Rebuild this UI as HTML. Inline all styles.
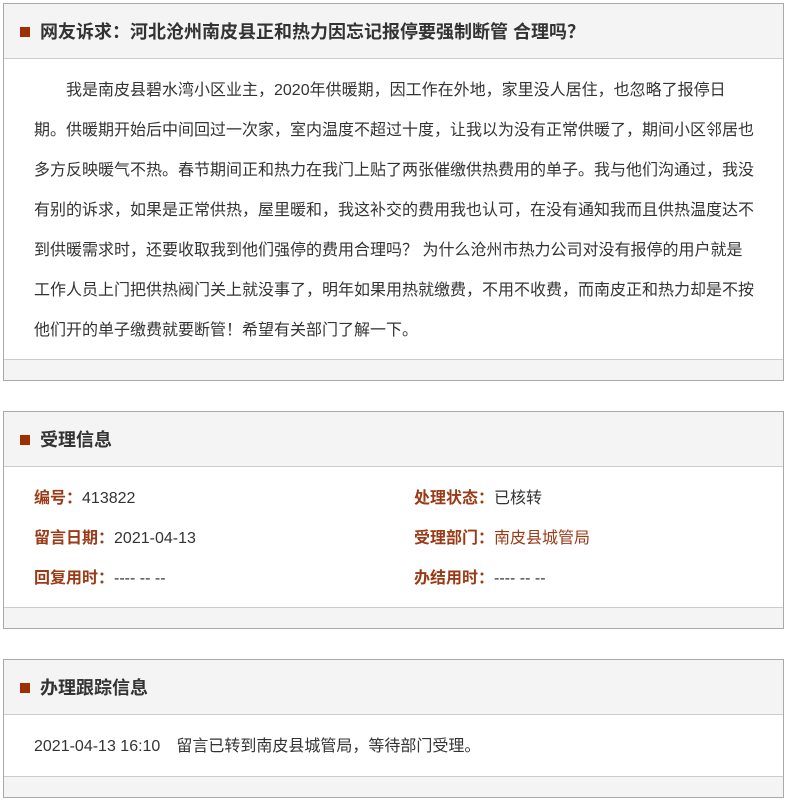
<!DOCTYPE html>
<html><head><meta charset="utf-8"><style>
body{margin:0;background:#fff;font-family:"Liberation Sans","Noto Sans CJK SC",sans-serif;color:#333;}
.box{position:absolute;left:3px;width:779px;border:1px solid #aaa;background:#fff;}
.hd{height:54px;background:#f4f4f4;border-bottom:1px solid #ccc;position:relative;}
.hd .sq{position:absolute;left:16px;top:23px;width:10px;height:10px;background:#9b3100;}
.hd .t{position:absolute;left:36px;top:1px;line-height:54px;font-size:18px;font-weight:bold;color:#333;white-space:nowrap;}
.ft{height:20px;background:#f4f4f4;border-top:1px solid #ccc;position:absolute;left:0;right:0;bottom:0;}
.body{position:relative;font-size:16px;}
.p{position:absolute;left:30px;top:12px;line-height:40px;white-space:nowrap;}
.lb{color:#9b3a17;font-weight:bold;}
.br{color:#9b3a17;}
.row{position:absolute;line-height:20px;white-space:nowrap;font-size:16px;}
</style></head><body>
<div class="box" style="top:3px;height:376px;">
<div class="hd"><div class="sq"></div><div class="t">网友诉求：河北沧州南皮县正和热力因忘记报停要强制断管 合理吗？</div></div>
<div class="body"><div class="p">&emsp;&emsp;我是南皮县碧水湾小区业主，2020年供暖期，因工作在外地，家里没人居住，也忽略了报停日<br>期。供暖期开始后中间回过一次家，室内温度不超过十度，让我以为没有正常供暖了，期间小区邻居也<br>多方反映暖气不热。春节期间正和热力在我门上贴了两张催缴供热费用的单子。我与他们沟通过，我没<br>有别的诉求，如果是正常供热，屋里暖和，我这补交的费用我也认可，在没有通知我而且供热温度达不<br>到供暖需求时，还要收取我到他们强停的费用合理吗？ 为什么沧州市热力公司对没有报停的用户就是<br>工作人员上门把供热阀门关上就没事了，明年如果用热就缴费，不用不收费，而南皮正和热力却是不按<br>他们开的单子缴费就要断管！希望有关部门了解一下。</div></div>
<div class="ft"></div>
</div>
<div class="box" style="top:411px;height:216px;">
<div class="hd"><div class="sq"></div><div class="t">受理信息</div></div>
<div class="row" style="left:30px;top:77px;"><span class="lb">编号：</span>413822</div>
<div class="row" style="left:410px;top:77px;"><span class="lb">处理状态：</span>已核转</div>
<div class="row" style="left:30px;top:117px;"><span class="lb">留言日期：</span>2021-04-13</div>
<div class="row" style="left:410px;top:117px;"><span class="lb">受理部门：</span><span class="br">南皮县城管局</span></div>
<div class="row" style="left:30px;top:157px;"><span class="lb">回复用时：</span>---- -- --</div>
<div class="row" style="left:410px;top:157px;"><span class="lb">办结用时：</span>---- -- --</div>
<div class="ft"></div>
</div>
<div class="box" style="top:659px;height:137px;">
<div class="hd"><div class="sq"></div><div class="t">办理跟踪信息</div></div>
<div class="row" style="left:30px;top:77px;">2021-04-13 16:10&emsp;留言已转到南皮县城管局，等待部门受理。</div>
<div class="ft"></div>
</div>
</body></html>
